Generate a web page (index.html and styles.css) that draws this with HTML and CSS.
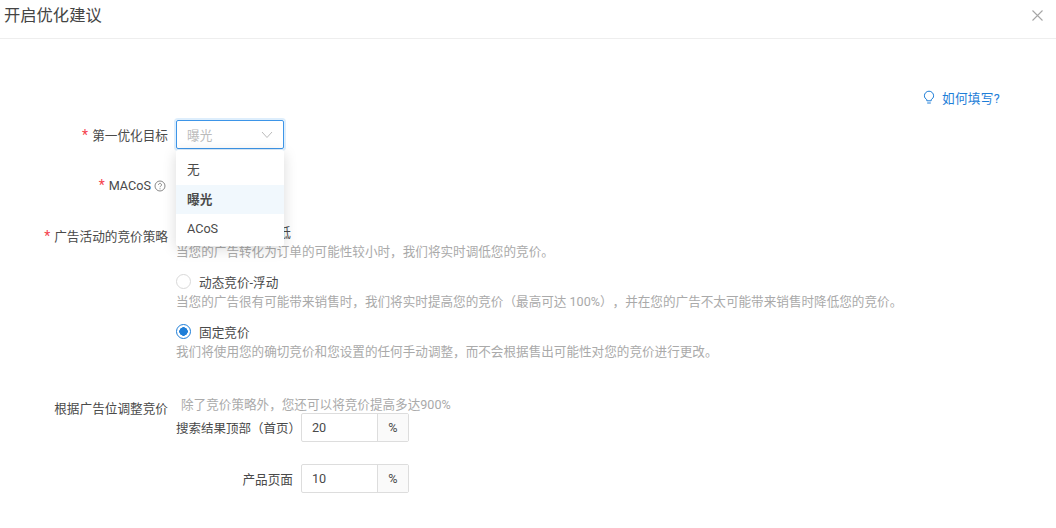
FILE: index.html
```html
<!DOCTYPE html>
<html lang="zh-CN">
<head>
  <meta charset="UTF-8">
  <title>开启优化建议</title>
  <link rel="stylesheet" href="styles.css">
</head>
<body>
  <header class="modal-head">
    <h2>开启优化建议</h2>
    <svg class="close" width="11" height="11" viewBox="0 0 11 11"><path d="M.5.5l10 10M10.500.5l-10 10" stroke="#a6a6a6" stroke-width="1.100" fill="none"/></svg>
  </header>

  <div class="help-row">
    <a class="help">
      <svg width="12" height="14" viewBox="0 0 12 14"><path d="M3.800 9.600C2.400 8.800 1.400 7.400 1.400 5.800a4.600 4.600 0 0 1 9.200 0c0 1.600-1 3-2.400 3.800v1.200H3.800zM4.200 13h3.600" stroke="#1e7ed8" stroke-width="1" fill="none"/></svg>
      如何填写?
    </a>
  </div>

  <div class="form-row row-goal">
    <label class="label"><i>*</i>第一优化目标</label>
    <div class="field">
      <div class="select">
        <span>曝光</span>
        <svg width="12" height="8" viewBox="0 0 12 8"><path d="M1 1l5 5.500L11 1" stroke="#bbb" stroke-width="1" fill="none"/></svg>
      </div>
      <ul class="dropdown">
        <li>无</li>
        <li class="active">曝光</li>
        <li>ACoS</li>
      </ul>
    </div>
  </div>

  <div class="form-row row-macos">
    <label class="label"><i>*</i>MACoS<svg class="tip" width="12" height="12" viewBox="0 0 12 12"><circle cx="6" cy="6" r="5" stroke="#888" fill="none"/><path d="M4.500 4.800a1.500 1.500 0 1 1 2.300 1.300c-.5.300-.8.600-.8 1.100M6 8.300v1" stroke="#888" fill="none"/></svg></label>
  </div>

  <div class="form-row row-bid">
    <label class="label"><i>*</i>广告活动的竞价策略</label>
    <div class="field">
      <div class="radio-item">
        <div class="radio-line"><span class="radio"></span>动态竞价-仅降低</div>
        <p class="desc">当您的广告转化为订单的可能性较小时，我们将实时调低您的竞价。</p>
      </div>
      <div class="radio-item">
        <div class="radio-line"><span class="radio"></span>动态竞价-浮动</div>
        <p class="desc">当您的广告很有可能带来销售时，我们将实时提高您的竞价（最高可达 100%），并在您的广告不太可能带来销售时降低您的竞价。</p>
      </div>
      <div class="radio-item">
        <div class="radio-line"><span class="radio on"></span>固定竞价</div>
        <p class="desc">我们将使用您的确切竞价和您设置的任何手动调整，而不会根据售出可能性对您的竞价进行更改。</p>
      </div>
    </div>
  </div>

  <div class="form-row row-place">
    <label class="label">根据广告位调整竞价</label>
    <div class="field">
      <p class="desc place-note">除了竞价策略外，您还可以将竞价提高多达900%</p>
      <div class="place-line first">
        <span class="place-label">搜索结果顶部（首页）</span>
        <div class="input-group"><span class="val">20</span><span class="unit">%</span></div>
      </div>
      <div class="place-line second">
        <span class="place-label">产品页面</span>
        <div class="input-group"><span class="val">10</span><span class="unit">%</span></div>
      </div>
    </div>
  </div>
</body>
</html>
```

FILE: styles.css
```css
*{margin: 0; padding: 0; box-sizing: border-box;}
body{
  width: 1056px; height: 528px;
  overflow: hidden;
  background: #fff;
  color: #4a4a4a;
  font-family: Roboto, "Noto Sans CJK SC", sans-serif;
  font-size: 12.650px;
  text-spacing-trim: space-all;
}
.modal-head{
  height: 39px;
  padding: 0 13px 11px 4px;
  border-bottom: 1px solid #eee;
  display: flex;
  align-items: center;
  justify-content: space-between;
}
.modal-head h2{font-size: 16.300px; font-weight: 400; color: #444;}
.close{margin-top: 3px;}

.help-row{
  display: flex;
  justify-content: flex-end;
  padding: 50px 56px 0 0;
  height: 70px;
}
.help{
  color: #1e7ed8;
  display: flex;
  align-items: center;
  gap: 7px;
  height: 16px;
  letter-spacing: .3px;
}

.form-row{display: flex;}
.label{
  width: 168px;
  text-align: right;
  flex-shrink: 0;
  line-height: 30px;
  white-space: nowrap;
}
.label i{color: #f5424d; font-style: normal; font-size: 14px; margin-right: 4px;}
.tip{vertical-align: -2px; margin-left: 3px; margin-right: 2px;}
.field{margin-left: 8px; position: relative;}

.row-goal{height: 30px; margin-top: 11px;}
.row-macos{height: 30px; margin-top: 20px;}
.row-bid{margin-top: 22px; height: 150px;}
.row-bid .label{line-height: 28px;}
.row-place{margin-top: 24px;}
.row-place .label{line-height: 18px; margin-top: 4px;}

.select{
  width: 108px; height: 29px;
  border: 1px solid #3d95e8;
  border-radius: 2px;
  box-shadow: 0 0 0 2px #deeefc;
  padding: 0 10px;
  display: flex;
  align-items: center;
  justify-content: space-between;
  color: #bbb;
}
.dropdown{
  position: absolute; top: 30px; left: 0;
  width: 108px; height: 96px;
  padding: 6px 0 0;
  list-style: none;
  background: #fff;
  border-radius: 2px;
  box-shadow: 0 3px 14px rgba(0,0,0,.15);
  z-index: 2;
}
.dropdown li{height: 29px; line-height: 29px; padding: 0 11px;}
.dropdown li:first-child{line-height: 27px;}
.dropdown li.active{background: #f1f8fd; font-weight: 700;}

.radio-item{height: 50px;}
.radio-line{display: flex; align-items: center; height: 18px; gap: 8px;}
.radio{
  width: 15px; height: 15px;
  border: 1px solid #d9d9d9;
  border-radius: 50%;
  flex-shrink: 0;
}
.radio.on{
  border-color: #1e7ed8;
  background: radial-gradient(circle, #1e7ed8 0 4px, #fff 4.500px);
}
.desc{color: #aaa; font-size: 12.600px; line-height: 18px; margin-top: 3px; white-space: nowrap;}
.place-note{margin: 0 0 0 5px;}

.place-line{display: flex; align-items: center; justify-content: flex-end; width: 233px;}
.place-line.first{margin-top: -1px;}
.place-line.second{margin-top: 22px;}
.place-label{margin-right: 8px; white-space: nowrap;}
.place-line.first .place-label{margin-right: 0; font-size: 12.500px;}
.input-group{
  width: 108px; height: 29px;
  border: 1px solid #ddd;
  border-radius: 2px;
  display: flex;
  align-items: center;
  flex-shrink: 0;
}
.val{flex: 1; padding-left: 10px;}
.unit{
  width: 31px; height: 100%;
  background: #fafafa;
  border-left: 1px solid #ddd;
  text-align: center;
  line-height: 27px;
}
```
